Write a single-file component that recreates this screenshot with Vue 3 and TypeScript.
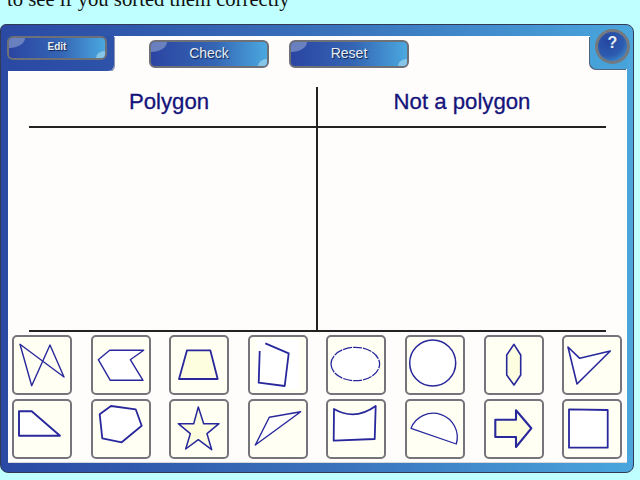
<script setup lang="ts">
type Shape = {
  id: number;
  d: string;
  fill: string;
  width?: number;
  dash?: string;
  backing?: boolean;
};

const white = "#fff";
const cream = "#fdfde0";

const shapes: Shape[] = [
  { id: 1, d: "M8 9.3 52 42 38 10 19.7 50.7Z", fill: "none", width: 1.4 },
  { id: 2, d: "M7.3 24.7 18.7 15.3H52.7L39.3 24.7 52 45.3H19.3Z", fill: white, width: 1.4 },
  { id: 3, d: "M18 15.3H41.3L48.7 44H10Z", fill: cream, width: 1.8 },
  { id: 4, d: "M17.3 8.3 40.7 18.3 36.7 51 10.7 47.7 11.7 16", fill: "none", width: 1.8, backing: true },
  { id: 5, d: "M5 29A24.3 16.7 0 1 1 53.6 29 24.3 16.7 0 1 1 5 29Z", fill: white, width: 1.3, dash: "9 1" },
  { id: 6, d: "M4.7 28A23 23 0 1 1 50.7 28 23 23 0 1 1 4.7 28Z", fill: white, width: 1.5 },
  { id: 7, d: "M30 9.3 36.7 20V40L30 50 22.7 40V20Z", fill: cream, width: 1.6 },
  { id: 8, d: "M6 12 17.7 23.3 48.3 16 15 49Z", fill: white, width: 1.6 },
  { id: 9, d: "M7 12.3H19.7L48 36.7H7Z", fill: white, width: 1.9 },
  { id: 10, d: "M8.7 15.3 20 7 44.7 10.3 50.7 26.7 30.7 43.3 11.3 39.3Z", fill: white, width: 1.8 },
  { id: 11, d: "M29.3 8 34.7 24.7H50L38 34.7 42.7 50.7 29.3 40.7 16.7 50 21.3 34.7 9.3 24.7H24.7Z", fill: cream, width: 1.5 },
  { id: 12, d: "M7.3 46 21.3 18.3 52.7 12.7Z", fill: white, width: 1.4 },
  { id: 13, d: "M8 10Q29 22 49.7 7L48.7 40 7.7 41.7Z", fill: white, width: 1.8 },
  { id: 14, d: "M6 29.3A24 24 0 0 1 51.3 45Z", fill: white, width: 1.3 },
  { id: 15, d: "M11.3 20.7H32V11.3L47.3 29.3 32 48V38H11.3Z", fill: cream, width: 2.1 },
  { id: 16, d: "M7 10.3 45.7 11V48.7H7Z", fill: white, width: 1.8 },
];
</script>

<template>
  <div class="page">
    <div class="intro">
      <p>to see if you sorted them correctly</p>
    </div>

    <main class="frame">
      <header class="head">
        <div class="editTab">
          <button type="button" class="btn small">Edit</button>
        </div>
        <button type="button" class="btn large check">Check</button>
        <button type="button" class="btn large reset">Reset</button>
        <div class="helpTab">
          <button type="button" class="help">?</button>
        </div>
      </header>

      <section class="panel">
        <div class="chart">
          <div class="col first">
            <h2>Polygon</h2>
          </div>
          <div class="col">
            <h2>Not a polygon</h2>
          </div>
        </div>

        <div class="tiles">
          <div v-for="shape in shapes" :key="shape.id" class="tile">
            <svg width="56" height="56" viewBox="2 2 56 56">
              <rect v-if="shape.backing" x="9" y="4" width="42" height="50" fill="#fff" />
              <path
                :d="shape.d"
                :fill="shape.fill"
                :stroke-width="shape.width"
                :stroke-dasharray="shape.dash"
                stroke="#28289c"
                stroke-linejoin="round"
              />
            </svg>
          </div>
        </div>
      </section>
    </main>
  </div>
</template>

<style>
html,
body {
  background: #bfffff;
}
</style>

<style scoped>
.page {
  width: 640px;
  height: 480px;
  overflow: hidden;
  background: #bfffff;
}

.intro {
  height: 24px;
  overflow: hidden;
}

.intro p {
  margin: -13px 0 0 7px;
  font-family: "Liberation Serif", serif;
  font-size: 20.7px;
  line-height: 24px;
  color: #111;
}

.frame {
  width: 634px;
  height: 449px;
  box-sizing: border-box;
  padding: 11px 6px 9px 7px;
  border-radius: 6px 8px 8px 8px;
  border: 1px solid #333a55;
  background: linear-gradient(90deg, #2a49a3, #3a74bd 55%, #4aa6dd);
  display: flex;
  flex-direction: column;
}

.head {
  display: flex;
  align-items: flex-start;
  height: 35px;
  background: #fffdfc;
  flex: none;
}

.editTab {
  width: 106px;
  height: 35px;
  background: linear-gradient(90deg, #2a49a3, #2e53a9);
  border-bottom-right-radius: 6px;
  box-shadow: 1px 1px 0 #8a96b4;
  flex: none;
}

.btn {
  position: relative;
  display: block;
  padding: 0;
  box-sizing: border-box;
  border: 2px solid #6e7078;
  border-radius: 6px;
  background: linear-gradient(90deg, #2b45a2, #3466b4 55%, #4ba8df);
  color: #e6eef4;
  font-family: "Liberation Sans", sans-serif;
  text-shadow: 1px 1px 1px #10204e;
  overflow: hidden;
}

.btn::before {
  content: "";
  position: absolute;
  left: 0;
  top: 0;
  width: 16px;
  height: 10px;
  border-bottom-right-radius: 16px 10px;
  background: #7f93c8;
  opacity: 0.75;
}

.btn::after {
  content: "";
  position: absolute;
  right: 0;
  bottom: 0;
  width: 9px;
  height: 7px;
  border-top-left-radius: 9px 7px;
  background: #9fd4ee;
  opacity: 0.7;
}

.small {
  width: 100px;
  height: 24px;
  margin-left: -1px;
  font-size: 10px;
  font-weight: bold;
  padding-bottom: 3px;
}

.large {
  width: 120px;
  height: 28px;
  margin-top: 4px;
  font-size: 14px;
  padding-bottom: 2px;
}

.check {
  margin-left: 35px;
}

.reset {
  margin-left: 20px;
}

.helpTab {
  position: relative;
  width: 37px;
  height: 33px;
  margin-left: auto;
  background: #48a2da;
  border-bottom-left-radius: 7px;
  box-shadow: -1px 1px 0 #50667f;
}

.help {
  position: absolute;
  left: 5px;
  top: -7px;
  width: 35px;
  height: 35px;
  padding: 0 0 8px;
  box-sizing: border-box;
  border: 3px solid #74787f;
  border-radius: 50%;
  background: radial-gradient(circle at 35% 30%, #2646a0, #2c5bb0 55%, #48a6dc);
  color: #e6eef4;
  font-family: "Liberation Sans", sans-serif;
  font-size: 16px;
  font-weight: bold;
}

.panel {
  flex: 1;
  background: #fffdfc;
  box-sizing: border-box;
  padding: 16px 0 0 0;
  box-shadow: inset 0 -1px 0 #d9d9d9;
}

.chart {
  display: grid;
  grid-template-columns: 289px 288px;
  width: 577px;
  height: 245px;
  box-sizing: border-box;
  margin-left: 21px;
  border-bottom: 2px solid #222;
}

.col {
  height: 41px;
  box-sizing: border-box;
  border-bottom: 2px solid #222;
}

.first {
  position: relative;
  padding-right: 9px;
}

/* the upright of the T runs down past the heading row */
.first::after {
  content: "";
  position: absolute;
  right: 0;
  top: 0;
  width: 2px;
  height: 244px;
  background: #222;
}

h2 {
  margin: 0;
  font-family: "Liberation Sans", sans-serif;
  font-size: 22.2px;
  font-weight: normal;
  line-height: 30px;
  text-align: center;
  color: #14147a;
  -webkit-text-stroke: 0.3px #14147a;
}

.tiles {
  display: grid;
  grid-template-columns: repeat(8, 60px);
  grid-auto-rows: 60px;
  column-gap: 18.6px;
  row-gap: 4px;
  margin: 3px 0 0 4px;
}

.tile {
  box-sizing: border-box;
  border: 2px solid #74747a;
  border-radius: 5px;
  background: #fffff3;
}

.tile svg {
  display: block;
}
</style>
